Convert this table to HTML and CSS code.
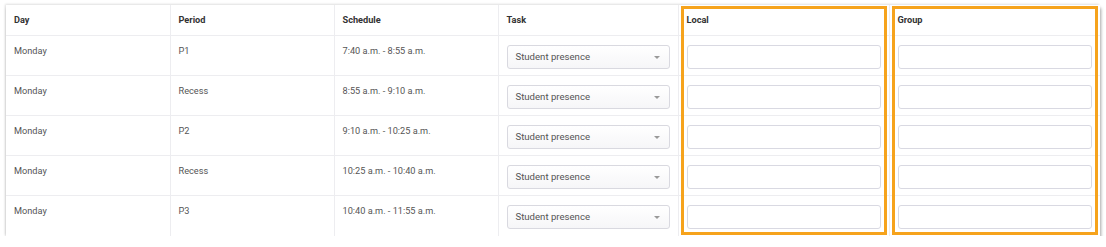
FILE: index.html
```html
<!DOCTYPE html>
<html lang="en">
<head>
    <meta charset="UTF-8">
    <title>Schedule</title>
    <link rel="stylesheet" href="styles.css">
</head>
<body>

    <div class="card">
        <table class="schedule">
            <colgroup>
                <col class="col-day">
                <col class="col-period">
                <col class="col-time">
                <col class="col-task">
                <col class="col-local">
                <col class="col-group">
            </colgroup>
            <thead>
                <tr>
                    <th>Day</th>
                    <th>Period</th>
                    <th>Schedule</th>
                    <th>Task</th>
                    <th>Local</th>
                    <th>Group</th>
                </tr>
            </thead>
            <tbody>
                <tr>
                    <td>Monday</td>
                    <td>P1</td>
                    <td>7:40 a.m. - 8:55 a.m.</td>
                    <td><div class="select">Student presence<span class="caret"></span></div></td>
                    <td><input class="field" type="text"></td>
                    <td><input class="field" type="text"></td>
                </tr>
                <tr>
                    <td>Monday</td>
                    <td>Recess</td>
                    <td>8:55 a.m. - 9:10 a.m.</td>
                    <td><div class="select">Student presence<span class="caret"></span></div></td>
                    <td><input class="field" type="text"></td>
                    <td><input class="field" type="text"></td>
                </tr>
                <tr>
                    <td>Monday</td>
                    <td>P2</td>
                    <td>9:10 a.m. - 10:25 a.m.</td>
                    <td><div class="select">Student presence<span class="caret"></span></div></td>
                    <td><input class="field" type="text"></td>
                    <td><input class="field" type="text"></td>
                </tr>
                <tr>
                    <td>Monday</td>
                    <td>Recess</td>
                    <td>10:25 a.m. - 10:40 a.m.</td>
                    <td><div class="select">Student presence<span class="caret"></span></div></td>
                    <td><input class="field" type="text"></td>
                    <td><input class="field" type="text"></td>
                </tr>
                <tr>
                    <td>Monday</td>
                    <td>P3</td>
                    <td>10:40 a.m. - 11:55 a.m.</td>
                    <td><div class="select">Student presence<span class="caret"></span></div></td>
                    <td><input class="field" type="text"></td>
                    <td><input class="field" type="text"></td>
                </tr>
            </tbody>
        </table>

        <!-- highlight frames around the two editable columns -->
        <div class="mark mark-local"></div>
        <div class="mark mark-group"></div>
    </div>

</body>
</html>
```

FILE: styles.css
```css
body {
    font-family: Roboto, "Liberation Sans", sans-serif;
    margin: 0;
    padding: 0;
    background-color: #fff;
    color: #555;
}

.card {
    position: relative;
    margin: 5px 6px 0 6px;
    width: 1094px;
    background-color: #fff;
    box-shadow: -1px -1px 2px rgba(0, 0, 0, 0.12), 1px 3px 3px rgba(0, 0, 0, 0.35);
}

.schedule {
    width: 100%;
    border-collapse: collapse;
    table-layout: fixed;
    font-size: 9.2px;
}

.col-day,
.col-period,
.col-time {
    width: 164px;
}

.col-task {
    width: 180px;
}

.col-local,
.col-group {
    width: 211px;
}

.schedule th,
.schedule td {
    border: 1px solid #ededf0;
    text-align: left;
}

.schedule tr:first-child th {
    border-top: none;
}

.schedule tr th:first-child,
.schedule tr td:first-child {
    border-left: none;
}

.schedule tr th:last-child,
.schedule tr td:last-child {
    border-right: none;
}

.schedule tbody tr:last-child td {
    border-bottom: none;
}

.schedule th {
    height: 28px;
    padding: 0 8px 2px 8px;
    font-weight: bold;
    color: #333;
    vertical-align: middle;
}

.schedule td {
    height: 40px;
    padding: 9px 8px 0 8px;
    line-height: 12px;
    vertical-align: top;
    box-sizing: border-box;
}

.select {
    position: relative;
    height: 24px;
    line-height: 22px;
    box-sizing: border-box;
    border: 1px solid #d9d9e0;
    border-radius: 3px;
    padding: 0 8px;
    background: linear-gradient(#fff, #f6f6f8);
    color: #555;
    font-size: 9.6px;
}

.caret {
    position: absolute;
    right: 9px;
    top: 10px;
    border-left: 3px solid transparent;
    border-right: 3px solid transparent;
    border-top: 3px solid #999;
}

.field {
    display: block;
    width: 100%;
    height: 24px;
    margin: 0;
    box-sizing: border-box;
    border: 1px solid #d9d9e2;
    border-radius: 3px;
    background-color: #fff;
}

.mark {
    position: absolute;
    top: 1px;
    width: 206px;
    height: 229px;
    box-sizing: border-box;
    border: 3px solid #f6a31c;
}

.mark-local {
    left: 675px;
}

.mark-group {
    left: 886px;
}
```
